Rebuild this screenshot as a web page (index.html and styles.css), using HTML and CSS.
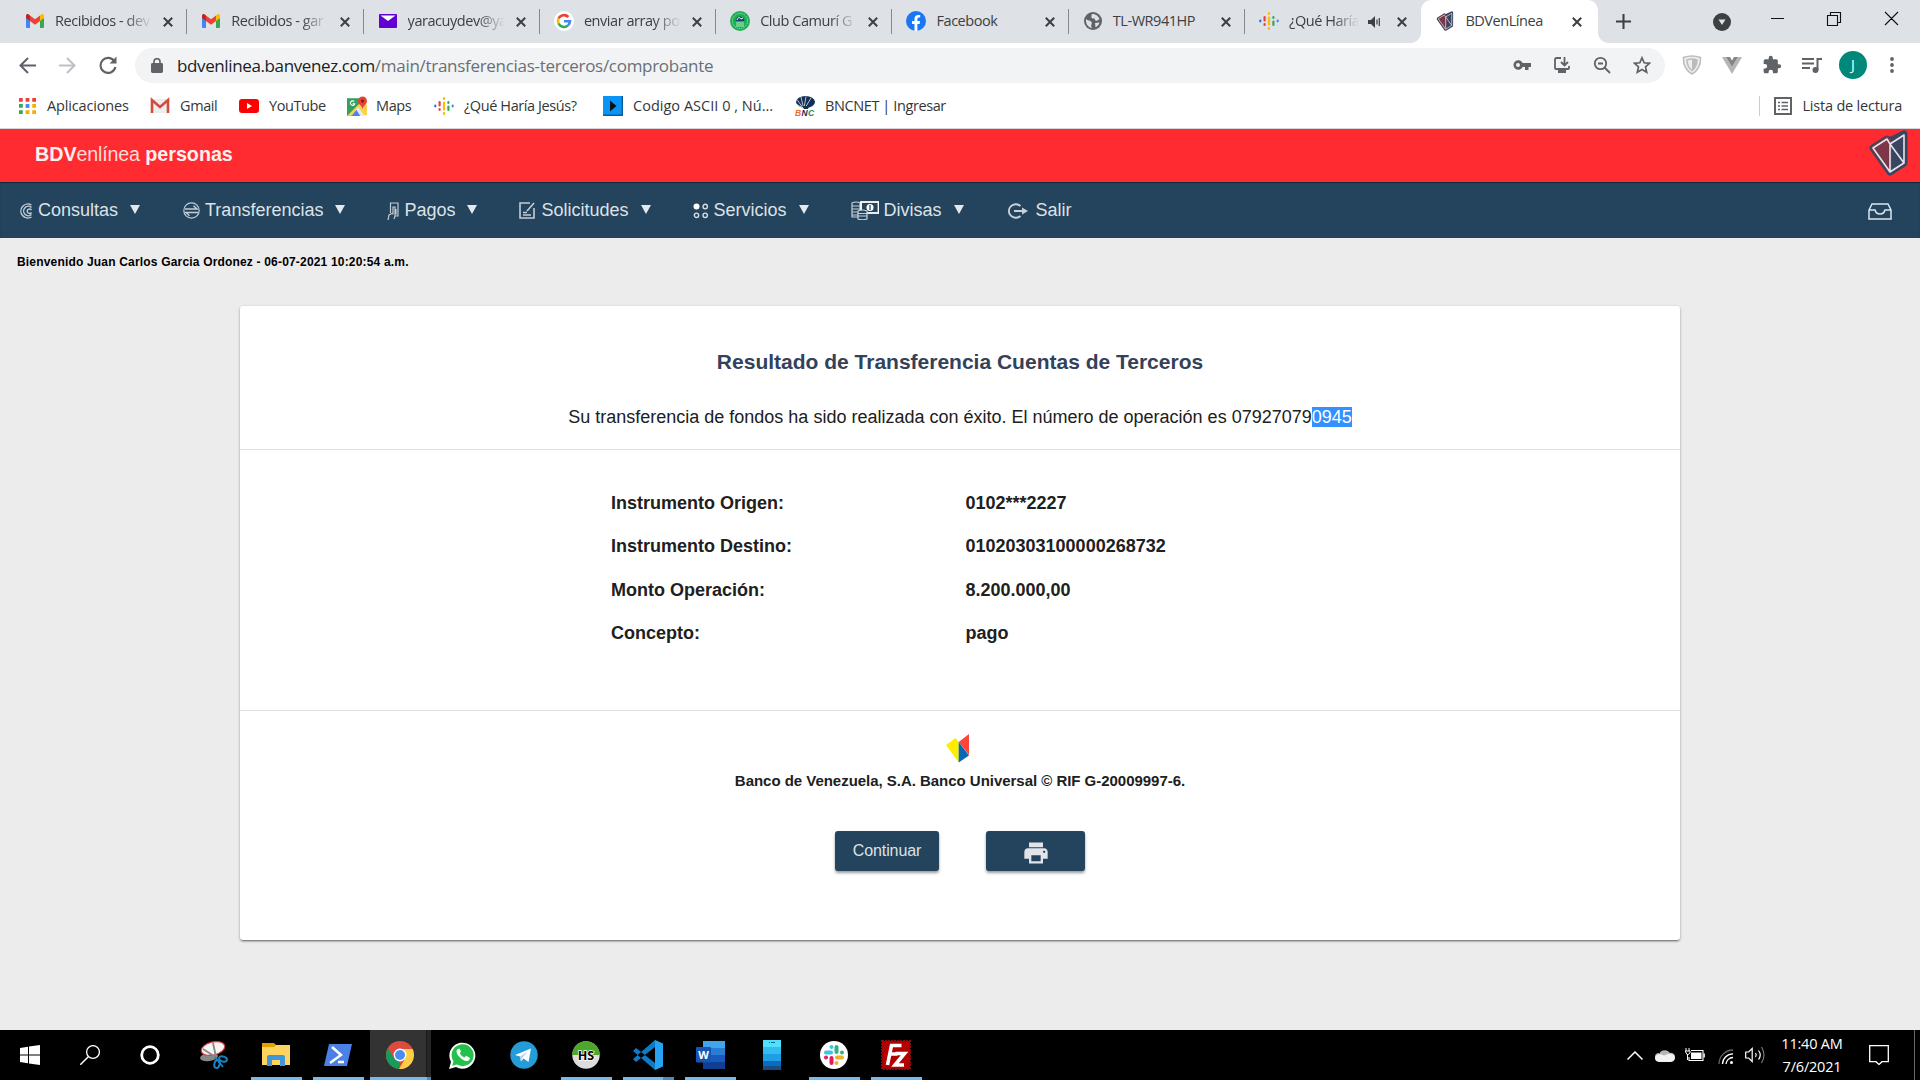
FILE: index.html
```html
<!DOCTYPE html>
<html lang="es">
<head>
<meta charset="utf-8">
<title>BDVenLínea</title>
<link rel="stylesheet" href="styles.css">
</head>
<body>
<svg class="defs" aria-hidden="true">
  <symbol id="x" viewBox="0 0 10 10"><path d="M.8.8l8.400 8.400M9.200.8L.8 9.200" stroke="#3c4043" stroke-width="2" fill="none"/></symbol>
  <symbol id="gmail" viewBox="0 0 18 14"><path d="M0 2v11a1 1 0 0 0 1 1h3V6z" fill="#4285f4"/><path d="M18 2v11a1 1 0 0 1-1 1h-3V6z" fill="#34a853"/><path d="M14 1.500V7l4-3V2c0-2-2-2.500-3.200-1.300z" fill="#fbbc04"/><path d="M4 1.500L9 5.200l5-3.700V7L9 10.700 4 7z" fill="#ea4335"/><path d="M0 2c0-2 2-2.500 3.200-1.300L4 1.500V7L0 4z" fill="#c5221f"/></symbol>
  <symbol id="pod" viewBox="0 0 20 20"><g stroke-width="2.200" stroke-linecap="round"><path d="M10 2v1M10 6.500v7M10 17v1" stroke="#fbbc04"/><path d="M5.600 6v3.500M5.600 13v1" stroke="#ea4335"/><path d="M14.400 6v1M14.400 10.500V14" stroke="#34a853"/><path d="M1.300 9.700v.6" stroke="#1a73e8"/><path d="M18.700 9.700v.6" stroke="#4285f4"/></g></symbol>
  <symbol id="bdv" viewBox="0 0 39 46"><path d="M4 18L18 9l3 2L35 4v29L21 42z" fill="#3a4560" stroke="#3a4560" stroke-width="7" stroke-linejoin="round"/><path d="M4 18L18 8l3 4v28z" fill="#8c3444" stroke="#7e3848" stroke-width="4" stroke-linejoin="round" opacity=".85"/><path d="M4 18l14-9 3 5 14-9v28l-14 9zM21 14v28M21 14l14 19" fill="none" stroke="#e8e4ea" stroke-width="1.600" stroke-linejoin="round"/></symbol>
</svg>

<header class="browser">
  <div class="tabs">
    <div class="tab"><svg class="fav"><use href="#gmail"/></svg><span class="title">Recibidos - dev</span><svg class="close"><use href="#x"/></svg></div>
    <div class="tab"><svg class="fav"><use href="#gmail"/></svg><span class="title">Recibidos - gar</span><svg class="close"><use href="#x"/></svg></div>
    <div class="tab"><svg class="fav" viewBox="0 0 18 18"><rect y="2" width="18" height="14" rx="1" fill="#6001d2"/><path d="M1.500 3.500h15L9 9z" fill="#fff"/></svg><span class="title">yaracuydev@ya</span><svg class="close"><use href="#x"/></svg></div>
    <div class="tab"><svg class="fav big" viewBox="0 0 20 20"><circle cx="10" cy="10" r="10" fill="#fff"/><g fill="none" stroke-width="2.600"><path d="M14.400 6A6 6 0 0 0 4.600 7.500" stroke="#ea4335"/><path d="M4.600 7.300a6 6 0 0 0 0 5.400" stroke="#fbbc04"/><path d="M4.600 12.500a6 6 0 0 0 9.400 1.900" stroke="#34a853"/><path d="M10 10.200h6a6 6 0 0 1-2 4.200" stroke="#4285f4"/></g></svg><span class="title">enviar array po</span><svg class="close"><use href="#x"/></svg></div>
    <div class="tab"><svg class="fav big" viewBox="0 0 20 20"><circle cx="10" cy="10" r="10" fill="#1fae54"/><circle cx="10" cy="10" r="7.600" fill="none" stroke="#a6e5bd" stroke-dasharray="1 1"/><path d="M5.500 10a4.500 4.500 0 0 1 9 0z" fill="#0e4b6b"/><path d="M7 9c1-3 3-3 4-1l2-1" stroke="#fff" fill="none"/><path d="M6 11h8v5H6z" fill="#68cf8d"/></svg><span class="title">Club Camurí G</span><svg class="close"><use href="#x"/></svg></div>
    <div class="tab"><svg class="fav big" viewBox="0 0 20 20"><circle cx="10" cy="10" r="10" fill="#1877f2"/><path d="M8.500 20v-7H6v-3h2.500V7.800c0-2.500 1.500-3.900 3.800-3.900.9 0 1.900.2 1.900.2v2.500h-1.300c-1.200 0-1.500.7-1.500 1.500V10h2.700l-.5 3h-2.200v7z" fill="#fff"/></svg><span class="title">Facebook</span><svg class="close"><use href="#x"/></svg></div>
    <div class="tab"><svg class="fav" viewBox="0 0 18 18"><circle cx="9" cy="9" r="9" fill="#5f6368"/><path d="M2 7c1.500 2 4.500 1 5.500 3S6 13 8 16c-4-.5-6.500-4.500-6-9zM8 2c3-.5 7 2 7.500 5.500-2 .5-2.500 2-4 1S12 6 9.500 6.500 7 4 8 2zm3 9l4.500-.5c-.5 2-2 4-4 4.800z" fill="#dee1e6"/></svg><span class="title">TL-WR941HP</span><svg class="close"><use href="#x"/></svg></div>
    <div class="tab"><svg class="fav big"><use href="#pod"/></svg><span class="title short">¿Qué Haría</span><svg class="audio" viewBox="0 0 12 12"><path d="M0 4h3l4-4v12L3 8H0z" fill="#3c4043"/><path d="M9 3.500v5M11.300 2v8" stroke="#3c4043" stroke-width="1.200"/></svg><svg class="close"><use href="#x"/></svg></div>
    <div class="tab active"><svg class="fav big" viewBox="0 0 39 46"><use href="#bdv"/></svg><span class="title">BDVenLínea</span><svg class="close"><use href="#x"/></svg></div>
    <svg class="plus" viewBox="0 0 16 16"><path d="M8 0v16M0 8h16" stroke="#3c4043" stroke-width="2.200"/></svg>
    <svg class="search-tabs" viewBox="0 0 18 18"><circle cx="9" cy="9" r="9" fill="#3c4043"/><path d="M5.500 6.500h7L9 12z" fill="#dee1e6"/></svg>
    <svg class="winctl" viewBox="0 0 130 15"><path d="M0 7.500h13M56.500 4.500h10v10h-10zM59.500 4v-2.500h10v10h-3M114 1l13 13M127 1l-13 13" fill="none" stroke="#111" stroke-width="1.100"/></svg>
  </div>

  <div class="toolbar">
    <svg class="back" viewBox="0 0 17 17"><path d="M17 8.500H1.500M9 1L1.500 8.500 9 16" fill="none" stroke="#5f6368" stroke-width="2"/></svg>
    <svg class="fwd" viewBox="0 0 17 17"><path d="M0 8.500h15.500M8 1l7.500 7.500L8 16" fill="none" stroke="#bdc1c6" stroke-width="2"/></svg>
    <svg class="reload" viewBox="0 0 18 18"><path d="M15.500 5.500A7.500 7.500 0 1 0 16.400 11" fill="none" stroke="#5f6368" stroke-width="2.100"/><path d="M17.500.5V7.500h-7z" fill="#5f6368"/></svg>
    <div class="omnibox">
      <svg class="lock" viewBox="0 0 12 15"><rect y="5" width="12" height="10" rx="1.400" fill="#5f6368"/><path d="M3 6V3.700a3 3 0 0 1 6 0V6" fill="none" stroke="#5f6368" stroke-width="1.600"/></svg>
      <span class="url"><b>bdvenlinea.banvenez.com</b>/main/transferencias-terceros/comprobante</span>
      <div class="omni-icons">
        <svg viewBox="0 0 18 18"><path d="M9.600 7A4.800 4.800 0 1 0 9.600 11H12v3h3.500v-3H18V7zM5 11a2 2 0 1 1 0-4 2 2 0 0 1 0 4z" fill="#5f6368"/></svg>
        <svg viewBox="0 0 18 18"><path d="M8 2H3.500Q2 2 2 3.500V12q0 1 1 1h12q1 0 1-1v-2M11.500 1v8M8 6l3.500 3.500L15 6" fill="none" stroke="#5f6368" stroke-width="1.800"/><path d="M5 13h8v4H5z" fill="#5f6368"/></svg>
        <svg viewBox="0 0 18 18"><circle cx="7.500" cy="7.500" r="5.700" fill="none" stroke="#5f6368" stroke-width="1.800"/><path d="M11.500 11.500l5.500 5.500M5 7.500h5" stroke="#5f6368" stroke-width="1.800"/></svg>
        <svg viewBox="0 0 18 18"><path d="M9 1.800l2.200 5 5.300.5-4 3.600 1.200 5.300L9 13.500l-4.700 2.700 1.200-5.300-4-3.600 5.300-.5z" fill="none" stroke="#5f6368" stroke-width="1.700"/></svg>
      </div>
    </div>
    <div class="ext">
      <svg viewBox="0 0 20 20"><path d="M1.500 2.500Q10-.5 18.500 2.500 19 14 10 19 1 14 1.500 2.500z" fill="#eee" stroke="#b9bbbe" stroke-width="1.500"/><path d="M5 5q5-2 10 0 0 7-5 10.500Q5 12 5 5z" fill="none" stroke="#b9bbbe" stroke-width="1.500"/><path d="M10 4.500q4 0 5 .7 0 6.500-5 10z" fill="#b9bbbe"/></svg>
      <svg viewBox="0 0 20 20"><path d="M0 2h4l6 10 6-10h4L10 19z" fill="#b5b5b5"/><path d="M4 2h4l2 3.500L12 2h4l-6 10z" fill="#858585"/></svg>
      <svg viewBox="0 0 24 24"><path d="M20.500 11H19V7a2 2 0 0 0-2-2h-4V3.500a2.500 2.500 0 0 0-5 0V5H4a2 2 0 0 0-2 2v3.800h1.500a2.700 2.700 0 0 1 0 5.400H2V20a2 2 0 0 0 2 2h3.800v-1.500a2.700 2.700 0 0 1 5.400 0V22H17a2 2 0 0 0 2-2v-4h1.500a2.500 2.500 0 0 0 0-5z" fill="#5f6368"/></svg>
      <svg viewBox="0 0 20 20"><path d="M0 4h12M0 8.500h12M0 13h8M15.500 15V4H20" fill="none" stroke="#5f6368" stroke-width="2"/><circle cx="13.500" cy="15" r="3" fill="#5f6368"/></svg>
      <span class="avatar">J</span>
      <svg class="dots" viewBox="0 0 4 18"><circle cx="2" cy="3" r="1.900" fill="#5f6368"/><circle cx="2" cy="9" r="1.900" fill="#5f6368"/><circle cx="2" cy="15" r="1.900" fill="#5f6368"/></svg>
    </div>
  </div>

  <div class="bookmarks">
    <div class="bm apps"><svg viewBox="0 0 18 18"><path d="M0 1h4v4H0zM7 1h4v4H7zM14 1h4v4h-4z" fill="#ea4335"/><path d="M0 7.500h4v4H0zM0 14h4v4H0z" fill="#34a853"/><path d="M7 7.500h4v4H7z" fill="#4285f4"/><path d="M14 7.500h4v4h-4zM7 14h4v4H7zM14 14h4v4h-4z" fill="#fbab00"/></svg><span>Aplicaciones</span></div>
    <div class="bm gm"><svg viewBox="0 0 20 18"><path d="M1 2h18v14H1z" fill="#eee"/><path d="M2 16V3l8 7 8-7v13" fill="none" stroke="#d54b3d" stroke-width="2.600"/></svg><span>Gmail</span></div>
    <div class="bm yt"><svg viewBox="0 0 20 18"><rect y="2" width="20" height="14" rx="3" fill="#f00"/><path d="M8 6l5 3-5 3z" fill="#fff"/></svg><span>YouTube</span></div>
    <div class="bm mp"><svg viewBox="0 0 18 18"><path d="M0 2h13v16H0z" fill="#34a060"/><path d="M0 18L13 5l5 3v9z" fill="#fbd14b"/><path d="M4 18l5-6 6 6z" fill="#4285f4"/><path d="M8 12l4 6h4L10 10z" fill="#e8eaed"/><path d="M14 12c0-3-4-4-4-7.500a4 4 0 0 1 8 0C18 8 14 9 14 12z" fill="#ea4335"/><circle cx="14" cy="4.500" r="1.500" fill="#8c1d14"/><path d="M6.500 5A2 2 0 1 0 7 7H5" fill="none" stroke="#fff"/></svg><span>Maps</span></div>
    <div class="bm qh"><svg><use href="#pod"/></svg><span>¿Qué Haría Jesús?</span></div>
    <div class="bm as"><svg viewBox="0 0 20 20"><path d="M0 0h20v20H0z" fill="#0a95f5"/><path d="M0 19.300h20M19.300 0v20" stroke="#075c9c" stroke-width="1.400"/><path d="M7 4.500l6.500 5.500L7 15.500z" fill="#06121c"/></svg><span>Codigo ASCII 0 , Nú...</span></div>
    <div class="bm bn"><svg viewBox="0 0 20 20"><ellipse cx="10.500" cy="6" rx="9.500" ry="6" fill="#142f55"/><path d="M8 12L1 8M8 12L2 3.500M8.500 12L6 1M9 12l2-11.500M10 12l6-10" stroke="#fff" stroke-width=".7"/><path d="M7 10h7l-1 3H9z" fill="#142f55"/><g font-family="Liberation Sans" font-size="8.500" font-weight="bold" font-style="italic" letter-spacing="0"><text x="0" y="20" fill="#f26b21">B</text><text x="6.500" y="20" fill="#142f55">N</text><text x="13" y="20" fill="#17935b">C</text></g></svg><span>BNCNET | Ingresar</span></div>
    <div class="reading"><svg viewBox="0 0 18 18"><path d="M1 1h16v16H1z" fill="none" stroke="#5f6368" stroke-width="2"/><path d="M4 5.500h2M4 9h2M4 12.500h2M7.500 5.500H14M7.500 9H14M7.500 12.500H14" stroke="#5f6368" stroke-width="1.600"/></svg><span>Lista de lectura</span></div>
  </div>
</header>

<main class="page">
  <div class="brand"><div class="wordmark"><b>BDV</b><i>enlínea</i> <b>personas</b></div><svg class="brand-logo"><use href="#bdv"/></svg></div>
  <nav class="menu">
    <a class="item"><svg width="15" height="18" viewBox="0 0 14 18"><path d="M13 3A7 7 0 1 0 13 15M13 5.500a4.700 4.700 0 1 0 0 7M13 8a2.300 2.300 0 1 0 0 2.500" fill="none" stroke="#c3cdd6" stroke-width="1.400"/></svg><span>Consultas</span><i class="caret"></i></a>
    <a class="item"><svg width="17" height="17" viewBox="0 0 17 17"><circle cx="8.500" cy="8.500" r="7.700" fill="none" stroke="#c3cdd6" stroke-width="1.200"/><path d="M2 7h12L10.500 3.800M15 10.500H3L6.500 13.700" fill="none" stroke="#c3cdd6" stroke-width="1.500"/></svg><span>Transferencias</span><i class="caret"></i></a>
    <a class="item"><svg width="12" height="18" viewBox="0 0 12 18"><path d="M3.500 11V1h7.500v13H8M6 7v5.500M9 12.500V7M1 18l1-5 4-2 0-6h2v9l-1 3" fill="none" stroke="#c3cdd6" stroke-width="1.200"/></svg><span>Pagos</span><i class="caret"></i></a>
    <a class="item"><svg width="17" height="17" viewBox="0 0 17 17"><path d="M11 1H1v15h14V6M4 13h8M4 10.500h4M8 9l7-8" fill="none" stroke="#c3cdd6" stroke-width="1.600"/></svg><span>Solicitudes</span><i class="caret"></i></a>
    <a class="item"><svg width="16" height="16" viewBox="0 0 16 16"><circle cx="3.500" cy="3.500" r="3" fill="#fff"/><g fill="none" stroke="#d5dce2" stroke-width="1.400"><circle cx="12.200" cy="3.500" r="2.200"/><circle cx="3.500" cy="12.300" r="2.200"/><circle cx="12.200" cy="12.300" r="2.200"/></g></svg><span>Servicios</span><i class="caret"></i></a>
    <a class="item"><svg width="28" height="19" viewBox="0 0 28 19"><g fill="none" stroke="#c8d1d9" stroke-width="1.200"><path d="M1 2q4-2 8 0v14H1zM1 5h8M1 8h8M1 11h8M1 14h8"/></g><rect x="10" y="1" width="17.500" height="11" fill="none" stroke="#fff" stroke-width="1.800"/><circle cx="19" cy="6.500" r="3.500" fill="#fff"/><path d="M19 4v5" stroke="#24435c" stroke-width="1.300"/><path d="M7 10q4.500-2 9 0v8q-4.500 1.500-9 0z" fill="#24435c" stroke="#c8d1d9" stroke-width="1.200"/><path d="M7 12.500h9M7 15h9" stroke="#c8d1d9" stroke-width="1.200"/></svg><span>Divisas</span><i class="caret"></i></a>
    <a class="item exit"><svg width="22" height="16" viewBox="0 0 22 16"><path d="M13.500 3A7 6.700 0 1 0 13.500 13M7 8h10" fill="none" stroke="#c8d1d9" stroke-width="1.900"/><path d="M15 4.500v7L21 8z" fill="#c8d1d9"/></svg><span>Salir</span></a>
    <svg class="inbox" viewBox="0 0 24 17"><path d="M1 7L4 1h16l3 6v9H1zM1 7h6q1 4 5 4t5-4h6" fill="none" stroke="#dbe6ec" stroke-width="1.500"/></svg>
  </nav>
  <p class="welcome">Bienvenido Juan Carlos Garcia Ordonez - 06-07-2021 10:20:54 a.m.</p>

  <section class="card">
    <header class="card-head">
      <h1>Resultado de Transferencia Cuentas de Terceros</h1>
      <p>Su transferencia de fondos ha sido realizada con éxito. El número de operación es 07927079<mark>0945</mark></p>
    </header>
    <dl class="details">
      <dt>Instrumento Origen:</dt><dd>0102***2227</dd>
      <dt>Instrumento Destino:</dt><dd>01020303100000268732</dd>
      <dt>Monto Operación:</dt><dd>8.200.000,00</dd>
      <dt>Concepto:</dt><dd>pago</dd>
    </dl>
    <footer class="card-foot">
      <svg class="flag" viewBox="0 0 23 29"><path d="M0 11L9.500 4l3.200 4v20.500z" fill="#ffed00"/><path d="M12.700 8L23 0v21z" fill="#ff4438"/><path d="M12.700 8L23 21.500l-10.300 7z" fill="#0668b3"/></svg>
      <p>Banco de Venezuela, S.A. Banco Universal © RIF G-20009997-6.</p>
      <div class="buttons">
        <button class="btn go">Continuar</button>
        <button class="btn print"><svg viewBox="0 0 24 24"><path d="M19 8H5c-1.660 0-3 1.340-3 3v6h4v4h12v-4h4v-6c0-1.660-1.340-3-3-3zm-3 11H8v-5h8v5zm3-7c-.55 0-1-.45-1-1s.45-1 1-1 1 .45 1 1-.45 1-1 1zm-1-9H6v4h12V3z" fill="#e1e5e9"/></svg></button>
      </div>
    </footer>
  </section>
</main>

<footer class="taskbar">
  <div class="task sys"><svg width="20" height="20" viewBox="0 0 20 20"><path d="M0 3l8-1.200v7.700H0zM9 1.600L20 0v9.500H9zM0 10.500h8v7.700L0 17zM9 10.500h11V20L9 18.400z" fill="#fff"/></svg></div>
  <div class="task sys"><svg width="20" height="20" viewBox="0 0 20 20"><circle cx="13" cy="7" r="6.400" fill="none" stroke="#fff" stroke-width="1.300"/><path d="M8.500 11.500L.3 19.700" stroke="#fff" stroke-width="1.500"/></svg></div>
  <div class="task sys"><svg width="20" height="20" viewBox="0 0 20 20"><circle cx="10" cy="10" r="8.300" fill="none" stroke="#fff" stroke-width="2.800"/></svg></div>
  <div class="task first"><svg width="28" height="28" viewBox="0 0 28 28"><ellipse cx="9" cy="16" rx="9" ry="4" fill="#888" transform="rotate(-8 9 16)"/><ellipse cx="13" cy="7.500" rx="12" ry="6.500" fill="#f5f5f5" stroke="#d93a36" stroke-width="1.200" transform="rotate(-14 13 7.500)"/><path d="M3 8l14 9M13 2l3 14" stroke="#888" stroke-width="1.800"/><g fill="none" stroke="#1683c6" stroke-width="2"><ellipse cx="23" cy="18" rx="4" ry="2.500" transform="rotate(20 23 18)"/><ellipse cx="17" cy="23" rx="2.600" ry="4" transform="rotate(15 17 23)"/><path d="M15 16l8 10" /></g></svg></div>
  <div class="task open"><svg width="28" height="24" viewBox="0 0 28 24"><path d="M0 0h12l2 2v4H0z" fill="#e0a100"/><path d="M0 4h12l2-2h14v20H0z" fill="#ffd35f"/><path d="M5 23V14q0-2 2-2h14q2 0 2 2v9h-5v-6h-8v6z" fill="#3f97d9"/></svg></div>
  <div class="task open"><svg width="28" height="22" viewBox="0 0 28 22"><path d="M5 0h23l-5 22H0z" fill="#4b80e6"/><path d="M8 3l9 8-11 8M14 18h6" fill="none" stroke="#fff" stroke-width="2.500"/></svg></div>
  <div class="task current"><svg width="28" height="28" viewBox="0 0 28 28"><circle cx="14" cy="14" r="14" fill="#dd4b3e"/><path d="M1.900 7L8 17.500 14 20.300 14 28A14 14 0 0 1 1.900 7z" fill="#159b5b"/><path d="M14 8h12.600A14 14 0 0 1 13 28l6.200-10.500z" fill="#ffce43"/><circle cx="14" cy="14" r="6.400" fill="#fff"/><circle cx="14" cy="14" r="5" fill="#4c8bf5"/></svg></div>
  <div class="task"><svg width="27" height="27" viewBox="0 0 27 27"><path d="M0 27l2-7A13 13 0 1 1 7 25z" fill="#fff"/><path d="M3.200 23.800l1.300-4.500A11 11 0 1 1 8 22.600z" fill="#25c04b"/><path d="M9 7c-2 1-2 4 1 7.500s7 5.500 9.500 4 1-3 .5-3.200l-3-1.500-1.500 1.700c-2-.7-4-2.500-4.700-4.300L12 9.500l-1.300-2.800z" fill="#fff"/></svg></div>
  <div class="task"><svg width="28" height="28" viewBox="0 0 28 28"><circle cx="14" cy="14" r="13.700" fill="#259cd8"/><path d="M5 14L21 7.500 18.500 21l-5-3.500-2.500 3-1-5z" fill="#fff"/><path d="M10 15.500l8-5-6 6.500-1 3.500z" fill="#b5cfe4"/></svg></div>
  <div class="task open"><svg width="28" height="28" viewBox="0 0 28 28"><circle cx="14" cy="14" r="13.700" fill="#ddd"/><path d="M.3 14a13.700 13.700 0 0 1 27.400 0z" fill="#4da72b"/><text x="14" y="18.500" text-anchor="middle" font-family="Open Sans" font-weight="bold" font-size="12.500" stroke="#fff" stroke-width="1.500" paint-order="stroke">HS</text></svg></div>
  <div class="task open split"><svg width="30" height="30" viewBox="0 0 30 30"><path d="M0 11l3-3 19 15v7zM0 19l3 3L22 7V0z" fill="#0d7bc9"/><path d="M22 0l8 3.500v23L22 30z" fill="#27a3f3"/></svg></div>
  <div class="task open"><svg width="29" height="28" viewBox="0 0 29 28"><path d="M7 0h22v7H7z" fill="#41a5ee"/><path d="M7 7h22v7H7z" fill="#2b7cd3"/><path d="M7 14h22v7H7z" fill="#185abd"/><path d="M7 21h22v7H7z" fill="#103f91"/><rect y="6" width="15" height="15.500" rx="1" fill="#1655b8"/><text x="7.500" y="17.700" text-anchor="middle" font-family="Open Sans" font-weight="bold" font-size="11" fill="#fff">W</text></svg></div>
  <div class="task"><svg width="18" height="30" viewBox="0 0 18 30"><path d="M0 0h18v7H0z" fill="#50e0fc"/><path d="M0 7h18v7H0z" fill="#32bdf0"/><path d="M0 14h18v7H0z" fill="#1e9fe3"/><path d="M0 21h18v5H0z" fill="#0a6bc0"/><path d="M0 26h18v4H0z" fill="#164d82"/><path d="M6 2.500h1M8 2.500h4" stroke="#125e96"/></svg></div>
  <div class="task open"><svg width="28" height="28" viewBox="0 0 28 28"><circle cx="14" cy="14" r="14" fill="#fff"/><g stroke-width="4" stroke-linecap="round"><path d="M6 11.500h5M11.500 6v0" stroke="#36c5f0"/><path d="M16.500 6v5M22 11.500v0" stroke="#2eb67d"/><path d="M17 16.500h5M16.500 22v0" stroke="#ecb22e"/><path d="M11.500 17v5M6 16.500v0" stroke="#e01e5a"/></g></svg></div>
  <div class="task open"><svg width="30" height="30" viewBox="0 0 30 30"><path d="M1 1h28v28H1z" fill="#b30000" stroke="#8f0a0a" stroke-width="2" stroke-dasharray="2 1"/><path d="M6.500 25L10.500 5.500h10M8.500 14h8M14.500 13.500h9L14 25h9" fill="none" stroke="#fff" stroke-width="3.600"/></svg></div>
  <div class="tray">
    <svg class="t1" viewBox="0 0 16 9"><path d="M.5 8.500L8 1l7.500 7.500" fill="none" stroke="#fff" stroke-width="1.500"/></svg>
    <svg class="t2" viewBox="0 0 20 13"><path d="M4 8a6 6 0 0 1 11-4 4 4 0 0 1 2 8H4a4 4 0 0 1 0-8z" fill="#b5b5b5"/><path d="M0 9q0-3 4-4 3 0 5 1.500L13 5q6-1 7 4-.5 3.500-4 4H4q-4-.5-4-4z" fill="#f2f2f2"/></svg>
    <svg class="t3" viewBox="0 0 20 14"><path d="M6 2.500h12v10H4V9M19.300 5.500v4" fill="none" stroke="#fff" stroke-width="1.100"/><path d="M6 4.500h10.500v6.500H6z" fill="#fff"/><path d="M1 0v3M4 0v3M0 3h5v2L2.500 7zM2.500 6v6" stroke="#fff" fill="none"/></svg>
    <svg class="t4" viewBox="0 0 15 15"><g fill="none" stroke-width="1.300"><path d="M1 15A14 14 0 0 1 15 1" stroke="#666"/><path d="M4.500 15A10.500 10.500 0 0 1 15 4.800M8 15a7 7 0 0 1 7-6.500" stroke="#fff"/></g><circle cx="13.500" cy="13.500" r="1.500" fill="#fff"/></svg>
    <svg class="t5" viewBox="0 0 20 18"><path d="M.7 6h3l3.500-3.500v13L3.700 12h-3z" fill="none" stroke="#fff" stroke-width="1.200"/><path d="M10.500 7q1.500 2 0 4M13.500 4.500q3.500 4.500 0 9" fill="none" stroke="#fff" stroke-width="1.200"/><path d="M16.500 1q5 8 0 16" fill="none" stroke="#777" stroke-width="1.200"/></svg>
    <div class="clock"><span>11:40 AM</span><span>7/6/2021</span></div>
    <svg class="t6" viewBox="0 0 20 20"><path d="M.7.7h18.600v16H13L10 19.500 7 16.700H.7z" fill="none" stroke="#fff" stroke-width="1.300"/></svg>
  </div>
</footer>
</body>
</html>
```
FILE: styles.css
```css
* { box-sizing: border-box; }
body { margin: 0; width: 1920px; height: 1080px; overflow: hidden; display: flex; flex-direction: column; background: #ececec; font-family: "Liberation Sans", Arial, sans-serif; }
svg { display: block; flex: none; }
p, h1, dl, dd { margin: 0; }
.defs { display: none; }

/* browser chrome */
.browser { flex: none; height: 129px; background: #fff; border-bottom: 1px solid #d3d5d8; font-family: "Open Sans", "Noto Sans", sans-serif; color: #3c4043; }
.tabs { height: 43px; background: #dee1e6; display: flex; align-items: center; padding-left: 11px; }
.tab { width: 176.300px; height: 43px; flex: none; display: flex; align-items: center; padding: 0 14px 2px 14px; position: relative; font-size: 14.500px; letter-spacing: -.45px; }
.tab:not(.active)::after { content: ""; position: absolute; right: 0; top: 9px; width: 1px; height: 25px; background: #85888d; }
.tab:nth-child(8)::after { display: none; }
.fav { width: 18px; height: 18px; margin: 0 11px 0 1px; }
.fav.big { width: 20px; height: 20px; margin: 0 10px 0 0; }
.title { width: 98px; white-space: nowrap; -webkit-mask-image: linear-gradient(to right, #000 70px, transparent 97px); mask-image: linear-gradient(to right, #000 70px, transparent 97px); }
.tab.active .title, .tab:nth-child(6) .title, .tab:nth-child(7) .title { -webkit-mask-image: none; mask-image: none; }
.title.short { width: 70px; -webkit-mask-image: linear-gradient(to right, #000 44px, transparent 70px); mask-image: linear-gradient(to right, #000 44px, transparent 70px); }
.audio { width: 12px; height: 12px; margin: 2px 0 0 9px; }
.close { width: 10px; height: 10px; margin-left: auto; margin-top: 2px; }
.active { background: #fff; border-radius: 10px 10px 0 0; }
.active .close { margin-right: 2px; }
.active::before { content: ""; position: absolute; inset: auto -10px 0 -10px; height: 10px; background: radial-gradient(circle at 0 0, transparent 9.500px, #fff 10px) left / 10px 10px no-repeat, radial-gradient(circle at 100% 0, transparent 9.500px, #fff 10px) right / 10px 10px no-repeat; }
.plus { width: 15px; height: 15px; margin-left: 18px; }
.search-tabs { width: 18px; height: 18px; margin-left: 82px; }
.winctl { width: 130px; height: 15px; margin-left: 40px; margin-bottom: 6px; }

.toolbar { height: 44px; display: flex; align-items: center; }
.back { width: 17px; height: 17px; margin-left: 19px; }
.fwd { width: 17px; height: 17px; margin-left: 23px; }
.reload { width: 18px; height: 18px; margin-left: 23px; }
.omnibox { width: 1530px; height: 35px; margin-left: 18px; background: #f1f3f4; border-radius: 18px; display: flex; align-items: center; }
.lock { width: 12px; height: 15px; margin-left: 16px; }
.url { margin-left: 14px; font-size: 17px; letter-spacing: -.29px; color: #6b6f74; white-space: nowrap; }
.url b { font-weight: 400; color: #202124; letter-spacing: -.38px; }
.omni-icons { margin: 0 14px 0 auto; display: flex; gap: 22px; }
.omni-icons svg { width: 18px; height: 18px; }
.ext { display: flex; align-items: center; gap: 20px; margin-left: 17px; }
.ext svg { width: 20px; height: 20px; }
.avatar { width: 28px; height: 28px; border-radius: 50%; background: #00897b; color: #fff; font-size: 14px; line-height: 28px; text-align: center; margin-left: -3px; }
.ext .dots { width: 4px; height: 20px; margin-left: 3px; }

.bookmarks { height: 37px; display: flex; align-items: center; padding-left: 19px; font-size: 14.500px; letter-spacing: -.4px; color: #333639; }
.bm { display: flex; align-items: center; white-space: nowrap; flex: none; }
.bm svg { width: 20px; height: 20px; margin-right: 10px; }
.apps { width: 131px; letter-spacing: -.15px; } .gm { width: 89px; } .yt { width: 108px; } .mp { width: 87px; } .qh { width: 169px; } .as { width: 192px; letter-spacing: .02px; }
.apps svg { width: 17px; height: 17px; margin-right: 11px; }
.mp span { margin-left: -1px; }
.reading { margin: 0 18px 0 auto; height: 20px; border-left: 1px solid #c9ccd0; padding-left: 14px; display: flex; align-items: center; gap: 10px; letter-spacing: -.2px; }
.reading svg { width: 18px; height: 18px; }

/* bank page */
.page { height: 901px; flex: none; }
.brand { height: 53px; background: #ff2b31; display: flex; justify-content: space-between; padding: 1px 12px 0 35px; }
.wordmark { padding-top: 13px; font-size: 19.700px; line-height: 22px; color: #ffdadb; }
.wordmark b { color: #fff0f0; }
.wordmark i { font-style: normal; letter-spacing: -.2px; }
.brand-logo { width: 39px; height: 46px; }
.menu { height: 56px; background: #24435c; display: flex; align-items: center; padding: 0 28px 0 18px; color: #dde2e7; font-size: 18px; box-shadow: inset 0 1px 1px #14283b; }
.item { display: flex; align-items: center; margin-right: 42px; white-space: nowrap; }
.item:first-child { margin-right: 43px; }
.item svg { margin-right: 5px; margin-top: 1px; }
.item span { padding-top: 1px; }
.exit { margin-left: 1px; }
.exit svg { margin-right: 7px; }
.caret { width: 0; height: 0; margin: 0 0 2px 12px; border: 5px solid transparent; border-top: 9px solid #e5e9ec; border-bottom: 0; }
.inbox { width: 24px; height: 17px; margin: 2px 0 0 auto; }
.welcome { padding: 16px 0 0 17px; height: 68px; font-size: 12px; line-height: 17px; font-weight: 700; letter-spacing: .18px; color: #000; }

.card { width: 1440px; height: 634px; margin: 0 auto; background: #fff; border-radius: 3px; box-shadow: 0 2px 2px -1px rgba(0,0,0,.4), 0 1px 3px rgba(0,0,0,.3); color: #202020; }
.card-head { height: 144px; border-bottom: 1px solid #e0e0e0; text-align: center; padding-top: 44px; }
.card-head h1 { font-size: 21px; line-height: 24px; color: #33425a; }
.card-head p { margin-top: 33px; font-size: 18px; line-height: 20px; }
mark { background: #3390ff; color: #fff; }
.details { height: 261px; border-bottom: 1px solid #e0e0e0; display: grid; grid-template-columns: 354.500px auto; grid-auto-rows: 43.400px; align-content: start; padding: 32px 0 0 371px; font-size: 18px; line-height: 43.400px; font-weight: 700; }
.card-foot { display: flex; flex-direction: column; align-items: center; padding-top: 23px; }
.flag { width: 23px; height: 29px; margin-right: 5px; }
.card-foot p { margin-top: 9px; font-size: 15px; line-height: 18px; font-weight: 700; letter-spacing: -.03px; }
.buttons { display: flex; gap: 47px; margin-top: 41px; }
.btn { height: 40px; padding: 0; border: 0; border-radius: 3px; background: #24435c; color: #dde2e7; font: 16px "Liberation Sans", Arial, sans-serif; box-shadow: 0 2px 3px rgba(0,0,0,.4); display: flex; align-items: center; justify-content: center; }
.go { width: 104px; letter-spacing: -.1px; }
.print { width: 99px; }
.print svg { width: 28px; height: 28px; margin-top: 3px; }

/* taskbar */
.taskbar { height: 50px; flex: none; background: #000; display: flex; color: #fff; }
.task { width: 62px; flex: none; display: flex; align-items: center; justify-content: center; position: relative; }
.task.sys { width: 60px; }
.task.first { margin-left: 3px; }
.open::after, .current::after { content: ""; position: absolute; left: 6px; bottom: 0; width: 51px; height: 3px; background: #76b9ed; }
.split::after { background: linear-gradient(to right, #76b9ed 40px, #5688b0 40px); }
.current::before { content: ""; position: absolute; left: 1px; top: 0; width: 61px; height: 50px; background: linear-gradient(to right, #333 56px, #181818 56px, #181818 57px, #262626 57px); }
.current::after { left: 1px; width: 61px; background: linear-gradient(to right, #76b9ed 57px, #5688b0 57px); }
.current svg { position: relative; }
.tray { margin-left: auto; display: flex; align-items: center; border-right: 1px solid #666; margin-right: 5px; padding-right: 25px; }
.t1 { width: 16px; height: 9px; }
.t2 { width: 20px; height: 13px; margin-left: 12px; }
.t3 { width: 20px; height: 14px; margin-left: 10px; }
.t4 { width: 15px; height: 15px; margin: 2px 0 0 13px; }
.t5 { width: 20px; height: 18px; margin-left: 12px; }
.clock { width: 62px; margin: 0 26px 0 16px; display: flex; flex-direction: column; align-items: center; font: 14.500px/23px "Open Sans", "Noto Sans", sans-serif; letter-spacing: -.2px; white-space: nowrap; }
.t6 { width: 20px; height: 20px; }
```
